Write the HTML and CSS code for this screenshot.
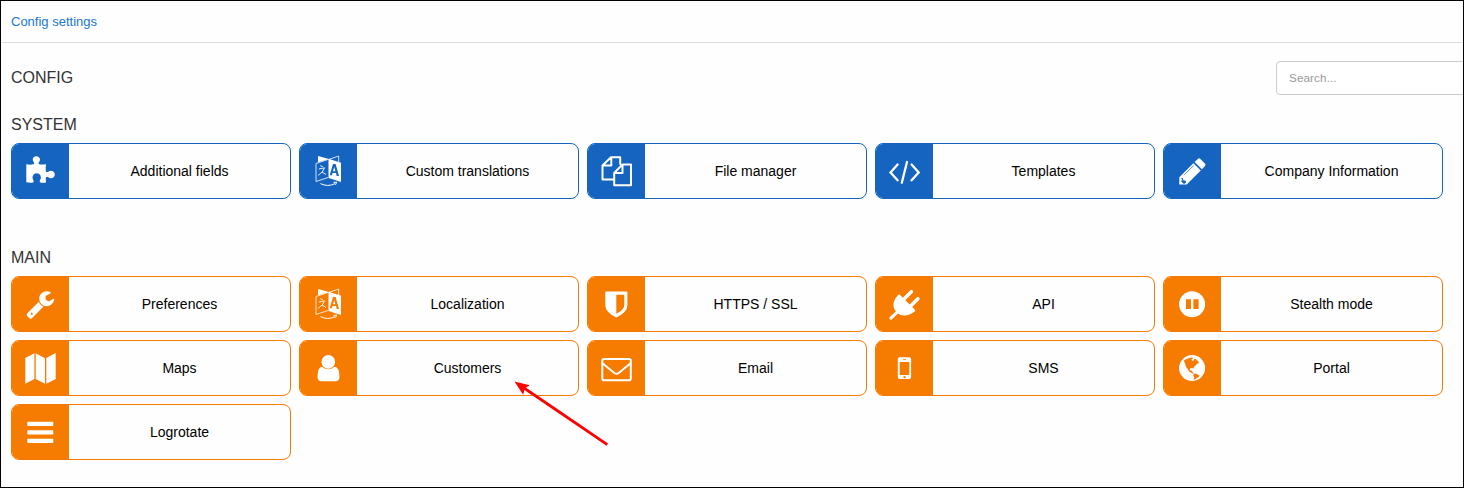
FILE: index.html
```html
<!DOCTYPE html>
<html lang="en">
<head>
<meta charset="utf-8">
<title>Config settings</title>
<link rel="stylesheet" href="styles.css">
</head>
<body>
<svg class="defs" width="0" height="0">
  <symbol id="translate" viewBox="1 1 57 54">
    <path d="M19 13v6.300l11-3.300z" fill="#fff"/>
    <path d="M29.500 16.500L39.700 13v7M29 16.500L17 20.500v18l12-4" fill="none" stroke="#fff" stroke-width=".8"/>
    <path fill-rule="evenodd" d="M29.500 15.700L42 19.700v19.300l-12.500-4zM34 21l-3.300 11.300h2.200l.6-2.300h3.500l.7 3h2.300L36.600 21zm1.200 3l1.200 4.200H34z" fill="#fff"/>
    <path d="M21.300 22.800l2.500.8M19.800 26l5.700-1.200q-1.200 4.500-6.300 7.500M23 29l4 2.500" fill="none" stroke="#fff" stroke-width=".9"/>
    <path d="M21.500 40.600q7 3.600 14.500 .1M34.500 39.400l3.200-.2-1.200 2.600" fill="none" stroke="#fff" stroke-width="1"/>
  </symbol>
</svg>
<div class="frame">
  <nav class="topbar"><a class="crumb">Config settings</a></nav>
  <header class="head">
    <h1 class="title">CONFIG</h1>
    <input class="search" type="text" placeholder="Search...">
  </header>
  <h2 class="title title-system">SYSTEM</h2>
  <div class="grid blue">
    <a class="card"><svg class="icon" viewBox="1 1 57 54"><path d="M15.300 21.300c3 .6 7.900.7 7.900-1 0-1.500-1.500-1.800-1.500-3.600 0-2 1.600-3.400 3.600-3.400s3.700 1.400 3.700 3.400c0 1.800-1.500 2.100-1.500 3.600 0 1.700 4 1.400 7.500 1-.3 3-.7 8 1 8 1.500 0 2-1.500 3.900-1.500s3.900 1.400 3.900 3.700-1.700 3.800-3.900 3.800-2.300-1.500-3.900-1.500c-1.900 0-1.100 3.300-.9 5.600-2.700.2-6.400.8-6.400-1 0-1.300 1.200-2.100 1.200-4.200 0-2.300-1.700-4-4.200-4s-4.200 1.700-4.200 4 1.200 2.900 1.200 4.200c0 1.800-4.400 1.400-7.400.9z"/></svg><span class="label">Additional fields</span></a>
    <a class="card"><svg class="icon"><use href="#translate"/></svg><span class="label">Custom translations</span></a>
    <a class="card"><svg class="icon line" viewBox="1 1 57 54"><path d="M26.500 36.500H15.500V22.500l8.500-8.300h9.200v6.800M24.300 14.200v8.300h-8.800M44 42.200H27.200V30l8.300-8.600H44zM35.500 21.400V30h-8.300"/></svg><span class="label">File manager</span></a>
    <a class="card"><svg class="icon line code" viewBox="1 1 57 54"><path d="M22.600 21.500l-7.100 7.900 7.100 7.900M36.600 21.500l7.100 7.900-7.100 7.900M32 19l-5.200 20.700"/></svg><span class="label">Templates</span></a>
    <a class="card"><svg class="icon" viewBox="1 1 57 54"><path d="M16.300 34.300L30.400 20.200l7.400 7.400-14.100 13.900h-7.400zM31.600 19l3.200-3.100q1.300-1.100 2.600 0l4.500 4.500q1.200 1.300.1 2.600l-3.100 3.300z"/><path class="cut" d="M21.300 31.800l9.300-9.200"/><path class="land" d="M18.200 34.700l1.700.3.300 2.200 2.600.6.300 1.500-1.500 1.500h-1l-2.400-2.400v-1h1.200z"/></svg><span class="label">Company Information</span></a>
  </div>
  <h2 class="title title-main">MAIN</h2>
  <div class="grid orange">
    <a class="card"><svg class="icon" viewBox="1 1 57 54"><path transform="translate(14.300 13) scale(.01674)" d="M448 1472q0-26-19-45t-45-19-45 19-19 45 19 45 45 19 45-19 19-45zm644-420l-682 682q-37 37-90 37-52 0-91-37l-106-108q-38-36-38-90 0-53 38-91l681-681q39 98 114.500 173.500t173.500 114.500zm634-435q0 39-23 106-47 134-164.500 217.500t-258.500 83.500q-185 0-316.500-131.500t-131.500-316.500 131.500-316.500 316.500-131.500q58 0 121.500 16.500t107.500 46.500q16 11 16 28t-16 28l-293 169v224l193 107q5-3 79-48.500t135.500-81 70.500-35.500q15 0 23.500 10t8.500 25z"/></svg><span class="label">Preferences</span></a>
    <a class="card"><svg class="icon"><use href="#translate"/></svg><span class="label">Localization</span></a>
    <a class="card"><svg class="icon" viewBox="1 1 57 54"><path fill-rule="evenodd" d="M19.200 15.500h20.200q1 0 1 1v12.800q0 7-11.100 12.200-11-5.200-11-12.200V16.500q0-1 .9-1zM29.300 18.700v19.100q8-4.300 8-8.600V18.700z"/></svg><span class="label">HTTPS / SSL</span></a>
    <a class="card"><svg class="icon" viewBox="1 1 57 54"><path d="M22.900 19.200q1.200-1.300 2.500 0l14.300 14.200q1.200 1.300-.2 2.300-2.500 1.500-5 2.700-5 2.300-10.400-.2l-4.100-4q-2.700-4.500-.7-9.500.8-2.500 3.600-5.500z"/><path class="prong" d="M29.500 22.500l6.900-6.800M36.400 29.300l6.500-6.600"/><path class="prong cord" d="M15.900 42.200l6.600-6.400"/></svg><span class="label">API</span></a>
    <a class="card"><svg class="icon" viewBox="1 1 57 54"><path fill-rule="evenodd" d="M16.100 28.200a13 13 0 1 0 26 0 13 13 0 1 0-26 0M23 23.300h5v9.700h-5zM30.400 23.300h5.200v9.700h-5.200z"/></svg><span class="label">Stealth mode</span></a>
    <a class="card"><svg class="icon" viewBox="1 1 57 54"><path d="M14.300 18L23.400 13.200V39l-9.100 4.700zM24.700 13.200L34 18.200v25.500L24.700 39zM35.300 18l9.400-5V39l-9.400 4.700z"/></svg><span class="label">Maps</span></a>
    <a class="card"><svg class="icon" viewBox="1 1 57 54"><circle cx="29.300" cy="21.900" r="6.800"/><path d="M23 26.800q6.300 5 12.600 0 4.900.7 4.900 9.700 0 4.700-4 4.700h-14q-4 0-4-4.700 0-9 4.500-9.700z"/></svg><span class="label">Customers</span></a>
    <a class="card"><svg class="icon line" viewBox="1 1 57 54"><rect x="15.300" y="18.900" width="28.500" height="21.300" rx="1.800"/><path d="M15.500 23.300l11.800 9.700q2.200 1.600 4.400 0l11.900-9.700"/></svg><span class="label">Email</span></a>
    <a class="card"><svg class="icon" viewBox="1 1 57 54"><path fill-rule="evenodd" d="M24.700 17.300h9.600q1.800 0 1.800 1.800v18q0 1.900-1.800 1.900h-9.600q-1.900 0-1.900-1.900v-18q0-1.800 1.900-1.800zM24.700 21.900v13.200h9.600V21.900zM28.200 19.200v.8h2.800v-.8zM29.500 36a1.100 1.100 0 1 0 .1 0z"/></svg><span class="label">SMS</span></a>
    <a class="card"><svg class="icon" viewBox="1 1 57 54"><circle cx="29.100" cy="28.100" r="13"/><path class="land" d="M20.800 20.500l2.300-1.200 3.300-1.400 2.500-.4 1.500.5-1.200.9-.9.900 1.700 1.100 1-.8.200-1.400 1.800.2.700 1.300 1.600 1.100.7 1.800-1.900.7-1.300 1.500-2 1.600-.3 2-1-.9-2.200.3-.6 1.500.9.900 1.400-.2.300 1.500 1.700 1.100-.1.500-2.400-.5-2.500-1.700-1.200-2.300-1.700-2.100-1-3.200zM31.200 33.500l2.100.2 3.200 1.800-.9 1.800-2.100.8-1.300 1.300-1.700.1.800-2.300-1.100-1.900z"/></svg><span class="label">Portal</span></a>
    <a class="card"><svg class="icon" viewBox="1 1 57 54"><rect x="16.300" y="17.700" width="26" height="4.300" rx=".8"/><rect x="16.300" y="26.300" width="26" height="4.200" rx=".8"/><rect x="16.300" y="34.800" width="26" height="4.200" rx=".8"/></svg><span class="label">Logrotate</span></a>
  </div>
  <svg class="pointer" width="100" height="70" viewBox="510 378 100 70"><path d="M524 388l83.300 56.700" stroke="#f00" stroke-width="2.800"/><path d="M514.500 381.500l15.300 3.800-5 3-1.700 6.500z" fill="#f00"/></svg>
</div>
</body>
</html>
```
FILE: styles.css
```css
* { box-sizing: border-box; }
body {
  margin: 0;
  font-family: "Liberation Sans", Arial, sans-serif;
  background: #fefefe;
}
.defs { position: absolute; }
.frame {
  position: relative;
  height: 488px;
  border: 1px solid #000;
  overflow: hidden;
}
.topbar {
  height: 42px;
  padding-left: 10px;
  border-bottom: 1px solid #ddd;
  line-height: 39px;
}
.crumb { font-size: 13px; color: #1976d2; }
.head {
  display: flex;
  justify-content: space-between;
  align-items: center;
  height: 34px;
  margin: 18px 0 0 10px;
}
.title {
  margin: 0;
  font-size: 16px;
  line-height: 20px;
  font-weight: 400;
  color: #333;
}
.title-system { margin: 19px 0 0 10px; padding-top: 1px; }
.title-main { margin: 49px 0 0 10px; }
.search {
  flex: none;
  width: 200px;
  height: 34px;
  margin-right: -13px;
  padding: 0 12px 2px;
  border: 1px solid #ccc;
  border-radius: 4px;
  background: #fff;
  font-family: inherit;
  font-size: 11.7px;
  letter-spacing: .1px;
}
.search::placeholder { color: #999; opacity: 1; }
.grid {
  display: grid;
  grid-template-columns: repeat(5, 280px);
  grid-auto-rows: 56px;
  gap: 8px;
  margin: 8px 0 0 10px;
}
.blue { --tone: #1565c0; }
.orange { --tone: #f57c00; }
.card {
  display: flex;
  overflow: hidden;
  border: 1px solid var(--tone);
  border-radius: 8px;
  background: #fefefe;
}
.icon {
  flex: none;
  width: 57px;
  height: 54px;
  background: var(--tone);
  fill: #fff;
}
.line { fill: none; stroke: #fff; stroke-width: 2; stroke-linejoin: round; stroke-linecap: round; }
.code { stroke-width: 2.3; stroke-linejoin: miter; }
.cut { fill: none; stroke: var(--tone); stroke-width: .8; }
.prong { fill: none; stroke: #fff; stroke-width: 3.5; stroke-linecap: round; }
.cord { stroke-width: 3; }
.land { fill: var(--tone); }
.label {
  flex: 1;
  text-align: center;
  font-size: 14px;
  line-height: 54px;
  color: #000;
}
.pointer { position: absolute; left: 509px; top: 377px; }
```
